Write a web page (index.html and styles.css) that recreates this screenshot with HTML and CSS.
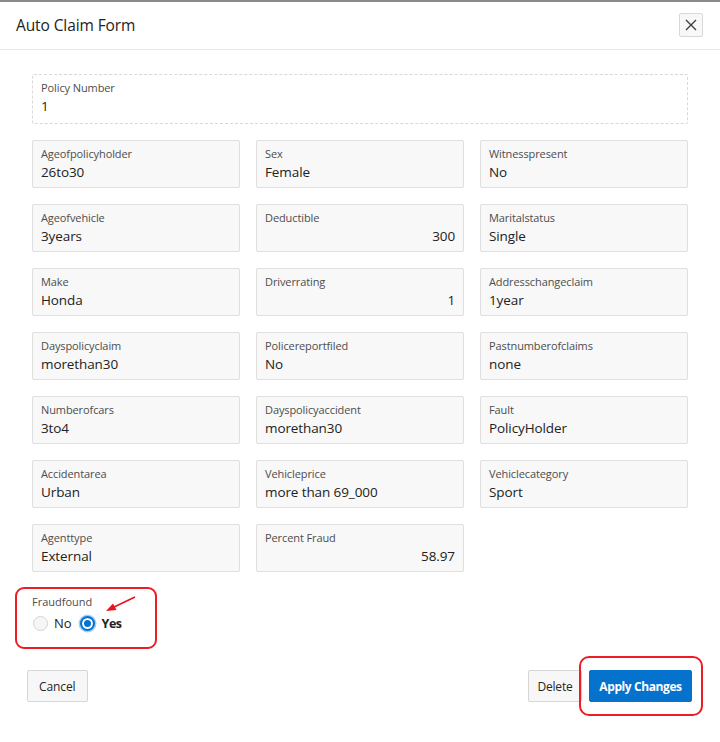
FILE: index.html
```html
<!DOCTYPE html>
<html>
<head>
<meta charset="utf-8">
<link rel="stylesheet" href="styles.css">
</head>
<body>
<div class="dialog">
  <div class="header">
    <h1 class="title">Auto Claim Form</h1>
    <button class="close" aria-label="Close">
      <svg width="14" height="14" viewBox="0 0 14 14"><path d="M2 2 L12 12 M12 2 L2 12" stroke="#3a3a3a" stroke-width="1.3" fill="none"/></svg>
    </button>
  </div>
  <div class="body">
    <div class="field policy">
      <div class="label">Policy Number</div>
      <div class="value">1</div>
    </div>
    <div class="grid">
      <div class="field"><div class="label">Ageofpolicyholder</div><div class="value">26to30</div></div>
      <div class="field"><div class="label">Sex</div><div class="value">Female</div></div>
      <div class="field"><div class="label">Witnesspresent</div><div class="value">No</div></div>
      <div class="field"><div class="label">Ageofvehicle</div><div class="value">3years</div></div>
      <div class="field"><div class="label">Deductible</div><div class="value num">300</div></div>
      <div class="field"><div class="label">Maritalstatus</div><div class="value">Single</div></div>
      <div class="field"><div class="label">Make</div><div class="value">Honda</div></div>
      <div class="field"><div class="label">Driverrating</div><div class="value num">1</div></div>
      <div class="field"><div class="label">Addresschangeclaim</div><div class="value">1year</div></div>
      <div class="field"><div class="label">Dayspolicyclaim</div><div class="value">morethan30</div></div>
      <div class="field"><div class="label">Policereportfiled</div><div class="value">No</div></div>
      <div class="field"><div class="label">Pastnumberofclaims</div><div class="value">none</div></div>
      <div class="field"><div class="label">Numberofcars</div><div class="value">3to4</div></div>
      <div class="field"><div class="label">Dayspolicyaccident</div><div class="value">morethan30</div></div>
      <div class="field"><div class="label">Fault</div><div class="value">PolicyHolder</div></div>
      <div class="field"><div class="label">Accidentarea</div><div class="value">Urban</div></div>
      <div class="field"><div class="label">Vehicleprice</div><div class="value">more than 69_000</div></div>
      <div class="field"><div class="label">Vehiclecategory</div><div class="value">Sport</div></div>
      <div class="field"><div class="label">Agenttype</div><div class="value">External</div></div>
      <div class="field"><div class="label">Percent Fraud</div><div class="value num">58.97</div></div>
    </div>
    <div class="fraud">
      <div class="flabel">Fraudfound</div>
      <div class="radios">
        <span class="radio"></span><span class="rtext">No</span>
        <span class="radio checked"></span><span class="rtext bold">Yes</span>
      </div>
      <div class="mark mark-fraud"></div>
      <svg class="arrow" width="40" height="20" viewBox="0 0 40 20">
        <path d="M33 2 L11 12.5" stroke="#e8141b" stroke-width="1.6" fill="none"/>
        <path d="M4 16 L11 8.5 L14.5 15 Z" fill="#e8141b"/>
      </svg>
    </div>
  </div>
  <div class="footer">
    <button class="btn">Cancel</button>
    <div class="right">
      <button class="btn narrow">Delete</button>
      <button class="btn primary">Apply Changes</button>
      <div class="mark mark-apply"></div>
    </div>
  </div>
</div>
</body>
</html>
```
FILE: styles.css
```css
* { box-sizing: border-box; }
html, body { margin: 0; padding: 0; background: #fff; }
body {
  font-family: "Open Sans", "Noto Sans", sans-serif;
  color: #262626;
  width: 720px;
  height: 742px;
  overflow: hidden;
}
.dialog {
  width: 720px;
  height: 742px;
  border-top: 2px solid #8a8a8a;
  position: relative;
}
.header {
  height: 48px;
  display: flex;
  align-items: center;
  justify-content: space-between;
  padding: 0 16px 0 16px;
  border-bottom: 1px solid #e6e6e6;
}
.title {
  margin: 0;
  font-size: 15.5px;
  font-weight: 400;
  color: #222;
  letter-spacing: -0.1px;
  padding-bottom: 2px;
}
.close {
  width: 24px;
  height: 24px;
  padding: 0;
  border: 1px solid #d8d8d8;
  border-radius: 2px;
  background: #f8f8f8;
  display: flex;
  align-items: center;
  justify-content: center;
  margin-right: 1px;
  margin-bottom: 2px;
}
.close svg { display: block; }
.body {
  padding: 24px 32px 0 32px;
}
.field {
  background: #f8f8f8;
  border: 1px solid #dfdfdf;
  border-radius: 2px;
  height: 48px;
  padding: 5px 8px 0 8px;
}
.policy {
  background: #fff;
  border: 1px dashed #d8d8d8;
  height: 50px;
  margin-bottom: 16px;
  padding-top: 5px;
}
.label {
  font-size: 11px;
  line-height: 16px;
  color: #4d4d4d;
  letter-spacing: -0.1px;
}
.value {
  font-size: 13.5px;
  line-height: 20px;
  color: #222;
  margin-top: 0;
  letter-spacing: -0.1px;
}
.value.num { text-align: right; }
.grid {
  display: grid;
  grid-template-columns: repeat(3, 208px);
  column-gap: 16px;
  row-gap: 16px;
}
.fraud {
  position: relative;
  padding-top: 22px;
}
.flabel {
  font-size: 11px;
  line-height: 16px;
  color: #4d4d4d;
}
.radios {
  display: flex;
  align-items: center;
  height: 22px;
  margin-top: 2px;
}
.radio {
  width: 15px;
  height: 15px;
  border-radius: 50%;
  border: 1px solid #d4d4d4;
  background: #f6f6f6;
  margin-left: 1px;
  margin-right: 6px;
  flex: none;
}
.radio.checked {
  background: #fff;
  border: 2px solid #0572ce;
  box-shadow: 0 0 0 1.5px rgba(5, 114, 206, 0.35), inset 0 0 0 2px #fff, inset 0 0 0 7px #0572ce;
  margin-left: 0;
  margin-right: 7px;
}
.rtext {
  font-size: 13px;
  margin-right: 8px;
  color: #222;
}
.rtext.bold {
  font-weight: 700;
  font-size: 12.5px;
  letter-spacing: -0.5px;
}
.mark {
  position: absolute;
  border: 2px solid #ee1c25;
  border-radius: 9px;
  pointer-events: none;
}
.mark-fraud {
  left: -17px;
  top: 15px;
  width: 142px;
  height: 62px;
}
.arrow {
  position: absolute;
  left: 70px;
  top: 23px;
}
.footer {
  display: flex;
  justify-content: space-between;
  align-items: center;
  padding: 0 28px 0 27px;
  margin-top: 36px;
}
.right {
  display: flex;
  gap: 7px;
  position: relative;
}
.btn {
  height: 32px;
  padding: 0 11px;
  font-family: "Open Sans", "Noto Sans", sans-serif;
  font-size: 12px;
  color: #262626;
  background: #f7f7f7;
  border: 1px solid #d6d6d6;
  border-radius: 2px;
  letter-spacing: -0.1px;
}
.btn.narrow {
  width: 54px;
  padding: 0;
  letter-spacing: -0.2px;
}
.btn.primary {
  width: 103px;
  background: #0572ce;
  border-color: #0572ce;
  color: #fff;
  font-weight: 700;
  padding: 0;
  letter-spacing: -0.4px;
}
.mark-apply {
  left: 51px;
  top: -14px;
  width: 124px;
  height: 60px;
  border-radius: 10px;
}
```
